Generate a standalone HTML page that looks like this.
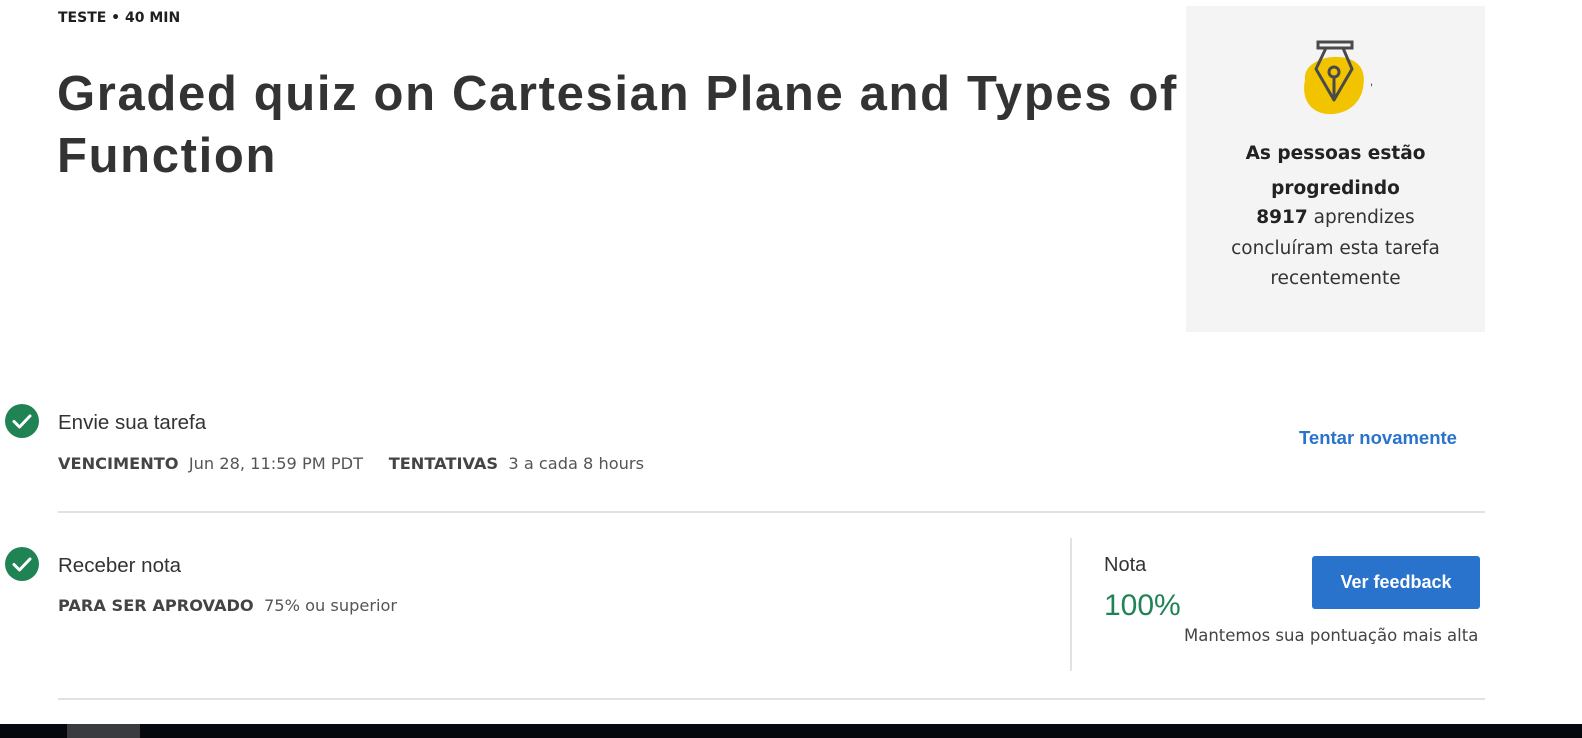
<!DOCTYPE html>
<html><head><meta charset="utf-8"><style>
*{margin:0;padding:0;box-sizing:border-box}
body{width:1582px;height:738px;background:#fff;position:relative;overflow:hidden;font-family:"Liberation Sans",sans-serif;color:#333}
.a{position:absolute;white-space:nowrap}
.os{font-family:"DejaVu Sans","Liberation Sans",sans-serif}
</style></head><body>
<div class="a os" style="left:58px;top:10px;font-size:14px;font-weight:bold;color:#1f1f1f">TESTE • 40 MIN</div>
<div class="a" style="left:57px;top:63px;font-size:49px;font-weight:bold;line-height:62px;color:#333;letter-spacing:1.65px">Graded quiz on Cartesian Plane and Types of<br>Function</div>

<div class="a" style="left:1186px;top:6px;width:299px;height:326px;background:#f4f4f4"></div>
<svg class="a" style="left:1300px;top:38px" width="90" height="80" viewBox="0 0 90 80">
<path d="M5 42 C3 27 22 18 38 19 C57 20 67 30 63 50 C60 67 45 77 28 76 C10 75 1 60 5 42Z" fill="#f2c400"/>
<rect x="18" y="4" width="34" height="6" fill="none" stroke="#4a4a4a" stroke-width="3"/>
<path d="M26 10 L16 31 L34 62 L52 31 L43 10" fill="none" stroke="#4a4a4a" stroke-width="3" stroke-linejoin="round"/>
<circle cx="34" cy="34" r="5" fill="none" stroke="#4a4a4a" stroke-width="3"/>
<line x1="34" y1="39" x2="34" y2="62" stroke="#4a4a4a" stroke-width="3"/>
<text x="70" y="47" font-size="11" fill="#333">,</text>
</svg>
<div class="a os" style="left:1186px;width:299px;top:136px;text-align:center;font-size:18.5px;line-height:35px;font-weight:bold;color:#222">As pessoas estão<br>progredindo</div>
<div class="a os" style="left:1186px;width:299px;top:203px;text-align:center;font-size:18.5px;line-height:30.5px;color:#333"><b style="color:#222">8917</b> aprendizes<br>concluíram esta tarefa<br>recentemente</div>

<svg class="a" style="left:5px;top:404px" width="34" height="34"><circle cx="17" cy="17" r="17" fill="#1f8354"/><path d="M9 17.5 L14.5 23 L25 12" fill="none" stroke="#fff" stroke-width="3" stroke-linecap="round" stroke-linejoin="round"/></svg>
<div class="a" style="left:58px;top:411px;font-size:20.5px;color:#333">Envie sua tarefa</div>
<div class="a os" style="left:58px;top:454px;font-size:16.2px;color:#555"><b style="color:#444">VENCIMENTO</b>&nbsp; Jun 28, 11:59 PM PDT &nbsp;&nbsp;&nbsp; <b style="color:#444">TENTATIVAS</b>&nbsp; 3 a cada 8 hours</div>
<div class="a" style="left:1299px;top:427px;font-size:18.5px;font-weight:bold;color:#2a73cc">Tentar novamente</div>
<div class="a" style="left:58px;top:511px;width:1427px;height:2px;background:#e2e2e2"></div>

<svg class="a" style="left:5px;top:547px" width="34" height="34"><circle cx="17" cy="17" r="17" fill="#1f8354"/><path d="M9 17.5 L14.5 23 L25 12" fill="none" stroke="#fff" stroke-width="3" stroke-linecap="round" stroke-linejoin="round"/></svg>
<div class="a" style="left:58px;top:554px;font-size:20.5px;color:#333">Receber nota</div>
<div class="a os" style="left:58px;top:596px;font-size:16.2px;color:#555"><b style="color:#444">PARA SER APROVADO</b>&nbsp; 75% ou superior</div>
<div class="a" style="left:1070px;top:538px;width:2px;height:133px;background:#e2e2e2"></div>
<div class="a" style="left:1104px;top:554px;font-size:20px;color:#333">Nota</div>
<div class="a" style="left:1104px;top:589px;font-size:30px;color:#1f8354">100%</div>
<div class="a" style="left:1312px;top:556px;width:168px;height:53px;background:#2a73cc;border-radius:3px;color:#fff;font-weight:bold;font-size:18px;text-align:center;line-height:53px">Ver feedback</div>
<div class="a os" style="left:1184px;top:626px;font-size:16.5px;color:#444">Mantemos sua pontuação mais alta</div>
<div class="a" style="left:58px;top:698px;width:1427px;height:2px;background:#e2e2e2"></div>

<div class="a" style="left:0;top:724px;width:1582px;height:14px;background:#05080d"></div>
<div class="a" style="left:67px;top:724px;width:73px;height:14px;background:#3a3b3f"></div>
</body></html>
